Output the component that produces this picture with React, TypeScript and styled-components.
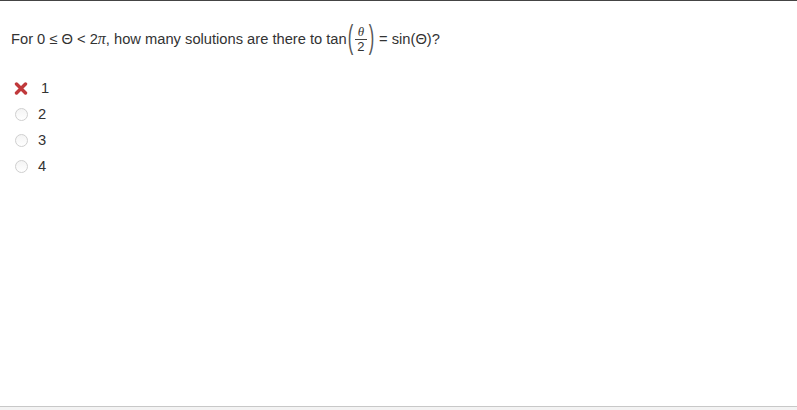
import React from 'react';
import styled, { createGlobalStyle } from 'styled-components';

const GlobalStyle = createGlobalStyle`
  html, body {
    margin: 0;
    padding: 0;
    background: #fff;
  }
  body {
    font-family: "Liberation Sans", Arial, sans-serif;
    color: #333;
  }
`;

const options = ['1', '2', '3', '4'];
const wrongIndex = 0;

function CrossIcon() {
  return (
    <svg width="14" height="13" viewBox="0 0 14 13">
      <path d="M2.5 2 L11.5 11 M11.5 2 L2.5 11" stroke="#c0393b" strokeWidth="3.4" strokeLinecap="round" />
    </svg>
  );
}

function App() {
  return (
    <Page>
      <GlobalStyle />
      <Main>
        <Question>
          For 0 ≤ Θ &lt; 2<Italic>π</Italic>, how many solutions are there to tan
          <Paren>(</Paren>
          <Fraction>
            <Num>θ</Num>
            <Den>2</Den>
          </Fraction>
          <Paren>)</Paren>
          <After>= sin(Θ)?</After>
        </Question>
        <OptionList>
          {options.map((opt, i) => (
            <Option key={opt}>
              <Marker>{i === wrongIndex ? <CrossIcon /> : <Radio />}</Marker>
              <Label $shift={i === wrongIndex}>{opt}</Label>
            </Option>
          ))}
        </OptionList>
      </Main>
      <Footer />
    </Page>
  );
}

export default App;

const Page = styled.div`
  height: 100vh;
  display: flex;
  flex-direction: column;
  border-top: 1px solid #444;
  box-sizing: border-box;
`;

const Main = styled.div`
  flex: 1;
  padding: 23px 0 0 11px;
`;

const Question = styled.div`
  display: flex;
  align-items: center;
  font-size: 14.7px;
  line-height: 30px;
  white-space: pre;
`;

const Italic = styled.i`
  font-family: "Liberation Serif", "Times New Roman", serif;
  font-size: 16px;
`;

const Paren = styled.span`
  font-family: "Liberation Sans", sans-serif;
  font-size: 33px;
  line-height: 30px;
  transform: scaleX(0.5) translateY(-2px);
  color: #555;
  margin: 0 -2px;
`;

const Fraction = styled.span`
  display: inline-flex;
  flex-direction: column;
  align-items: center;
  margin: 0 1px;
`;

const Num = styled.span`
  font-family: "Liberation Serif", serif;
  font-style: italic;
  font-size: 13px;
  line-height: 14px;
  padding: 0 3px;
  border-bottom: 1px solid #444;
`;

const Den = styled.span`
  font-size: 13px;
  line-height: 14px;
`;

const After = styled.span`
  margin-left: 4px;
`;

const OptionList = styled.div`
  margin-top: 21px;
  display: flex;
  flex-direction: column;
`;

const Option = styled.div`
  display: flex;
  align-items: center;
  height: 26px;
  font-size: 14.7px;
`;

const Marker = styled.span`
  width: 24px;
  padding-left: 3px;
  display: flex;
  align-items: center;
`;

const Radio = styled.span`
  width: 11px;
  height: 11px;
  border-radius: 50%;
  border: 1px solid #cfcfcf;
  background: linear-gradient(#f4f4f4, #fff);
  margin-left: 1px;
`;

const Label = styled.span<{ $shift: boolean }>`
  margin-left: ${(p) => (p.$shift ? '3px' : '0')};
`;

const Footer = styled.div`
  height: 3px;
  border-top: 1px solid #c8c8c8;
  background: #f3f3f3;
`;
